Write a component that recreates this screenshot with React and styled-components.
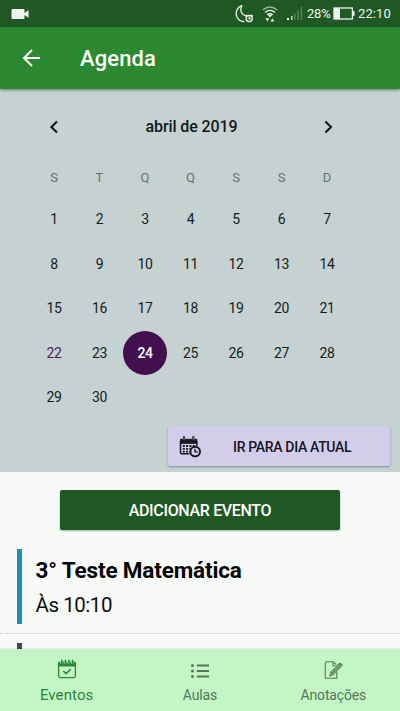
import React from 'react';
import styled, { createGlobalStyle } from 'styled-components';

const GlobalStyle = createGlobalStyle`
  * { box-sizing: border-box; }
  body { margin: 0; overflow: hidden; font-family: Roboto, "Liberation Sans", sans-serif; }
  button { border: 0; padding: 0; margin: 0; font: inherit; background: none; cursor: pointer; }
  svg { display: block; flex: none; }
`;

const Screen = styled.div`
  width: 400px;
  height: 711px;
  display: flex;
  flex-direction: column;
  overflow: hidden;
  background: #f8faf7;
  color: #111816;
`;

const StatusBar = styled.div`
  height: 27px;
  flex: none;
  display: flex;
  align-items: center;
  padding: 0 9px 0 11px;
  background: #1f5822;
  color: #eef5ee;
  font-size: 13px;
  line-height: 27px;
`;

const StatusIcons = styled.div`
  margin-left: auto;
  display: flex;
  align-items: center;
`;

const StatusGap = styled.span`
  width: ${(p) => p.$w}px;
`;

const Percent = styled.span`
  width: 24px;
  margin: 0 2px 0 4px;
  letter-spacing: -0.2px;
`;

const Clock = styled.span`
  width: 33px;
  margin: 0 0 0 3px;
  letter-spacing: 0.1px;
`;

const AppBar = styled.header`
  height: 62px;
  flex: none;
  display: flex;
  align-items: center;
  padding-left: 22px;
  gap: 39px;
  background: #2c8932;
  color: #fafdfa;
  box-shadow: 0 1px 3px rgba(0, 0, 0, 0.45);
  z-index: 1;
`;

const Title = styled.h1`
  margin: 1px 0 0;
  font-size: 22px;
  font-weight: 500;
  letter-spacing: 0.1px;
`;

const Calendar = styled.section`
  height: 383px;
  flex: none;
  display: flex;
  flex-direction: column;
  background: #c5d2d1;
`;

const MonthRow = styled.div`
  height: 75px;
  flex: none;
  display: flex;
  align-items: center;
  justify-content: space-between;
  padding: 0 63px 0 45px;
`;

const MonthName = styled.h2`
  margin: 0;
  padding-left: 1px;
  font-size: 16px;
  font-weight: 500;
  letter-spacing: -0.1px;
`;

const WeekdayRow = styled.div`
  height: 28px;
  margin: 0 0 5px 31.25px;
  flex: none;
  display: grid;
  grid-template-columns: repeat(7, 45.5px);
  align-items: center;
  justify-items: center;
`;

const WeekRow = styled.div`
  height: 44.5px;
  margin-left: 31.25px;
  flex: none;
  display: grid;
  grid-template-columns: repeat(7, 45.5px);
  justify-items: center;
`;

const WeekdayName = styled.span`
  margin-top: -2px;
  font-size: 13px;
  color: #66716f;
`;

const Day = styled.button`
  width: 44.5px;
  height: 44.5px;
  border-radius: 50%;
  font-size: 14px;
  line-height: 45.5px;
  letter-spacing: -0.4px;
  background: ${(p) => (p.$selected ? '#43104f' : 'transparent')};
  color: ${(p) => (p.$selected ? '#fff' : p.$today ? '#4b1c5c' : '#151d1b')};
  font-weight: ${(p) => (p.$selected ? 500 : 400)};
`;

const TodayButton = styled.button`
  width: 222px;
  height: 40px;
  flex: none;
  display: flex;
  align-items: center;
  align-self: flex-end;
  margin: 6.5px 10px 0 0;
  padding: 2px 0 0 11px;
  gap: 32px;
  border-radius: 2px;
  background: #d2cdea;
  color: #14161c;
  font-size: 14px;
  font-weight: 500;
  letter-spacing: -0.33px;
  box-shadow: 0 1px 2px rgba(40, 40, 70, 0.42);
`;

const Events = styled.main`
  height: 177px;
  flex: none;
  overflow: hidden;
  display: flex;
  flex-direction: column;
`;

const AddButton = styled.button`
  width: 280px;
  height: 40px;
  flex: none;
  align-self: center;
  margin: 18px 0 14px;
  border-radius: 2px;
  background: #1f5822;
  color: #fff;
  font-size: 16px;
  font-weight: 500;
  letter-spacing: -0.33px;
  box-shadow: 0 1px 2px rgba(40, 40, 80, 0.4);
`;

const EventRow = styled.article`
  height: 90px;
  flex: none;
  padding: ${(p) => (p.$next ? '9px' : '5px')} 0 9px 17px;
  border-bottom: 1px dotted #c3c6ca;
`;

const EventBody = styled.div`
  height: 75px;
  border-left: 5px solid ${(p) => p.$color};
  padding-left: 13.5px;
`;

const EventTitle = styled.h3`
  margin: 0;
  padding: 4px 0 1px;
  font-size: 22.5px;
  line-height: 34px;
  font-weight: 700;
  letter-spacing: -0.15px;
  color: #050706;
`;

const EventTime = styled.p`
  margin: 0;
  font-size: 20.5px;
  line-height: 34px;
  letter-spacing: -0.45px;
  color: #0a0d0b;
`;

const BottomNav = styled.nav`
  height: 62px;
  flex: none;
  display: grid;
  grid-template-columns: repeat(3, 1fr);
  background: #c3f6c4;
  box-shadow: 0 -1px 1px rgba(0, 0, 0, 0.06);
  z-index: 1;
`;

const NavItem = styled.button`
  display: flex;
  flex-direction: column;
  align-items: center;
  padding-top: 10px;
  color: ${(p) => (p.$active ? '#2b8733' : '#557758')};
`;

const NavLabel = styled.span`
  margin-top: 7px;
  font-size: ${(p) => (p.$active ? '15px' : '14px')};
  line-height: 18px;
  letter-spacing: ${(p) => (p.$active ? '0.1px' : '-0.15px')};
`;

const VideoIcon = () => (
  <svg width="18" height="10" viewBox="0 0 18 10" fill="currentColor">
    <rect x="0.5" y="0" width="13" height="10" rx="1" />
    <path d="M13 4.3 17.6 1.2v7.6L13 5.7z" />
  </svg>
);

const MoonIcon = () => (
  <svg width="20" height="20" viewBox="0 0 20 20" fill="none" stroke="currentColor" strokeWidth="1.3">
    <path d="M8.2 1.3C.8 4 .4 13.2 6.2 16.6q2 1 4.2 1M8.2 1.3C5.3 5.5 7.2 11.2 12.2 11.8" />
    <circle cx="15.2" cy="14.6" r="3.1" />
    <path d="M15.2 12.8v2h1.6M11.6 12.3l1.5-1.3M17.3 11l1.5 1.3" />
  </svg>
);

const WifiIcon = () => (
  <svg width="16" height="18" viewBox="0 0 16 18" fill="none" stroke="currentColor" strokeWidth="1.3">
    <path d="M.8 5.1Q8-1.2 15.2 5.1" opacity=".6" />
    <path d="M3 7.5q5-4.2 10 0M5.2 9.7q2.8-2.3 5.6 0" />
    <path d="M5.3 9.5h5.4L8 12.6zM3.4 13.2h4l-2 3.4zM8.4 16.6l2-3.3 2 3.3z" fill="currentColor" stroke="none" />
  </svg>
);

const SignalIcon = () => (
  <svg width="16" height="13" viewBox="0 0 16 13" fill="#55845a">
    <rect x="0" y="11" width="2" height="2" fill="#f1f6f1" />
    <rect x="4" y="9" width="1.5" height="4" fill="#c6d7c7" />
    <rect x="7" y="6.5" width="1.5" height="6.5" />
    <rect x="10.3" y="3" width="1.5" height="10" />
    <rect x="13.7" y="0" width="1.5" height="13" />
  </svg>
);

const BatteryIcon = () => (
  <svg width="22" height="13" viewBox="0 0 22 13" fill="currentColor">
    <rect x="1" y="1" width="18.4" height="11" fill="none" stroke="currentColor" strokeWidth="1.3" />
    <rect x="1" y="1" width="6" height="11" />
    <rect x="20" y="4.2" width="1.6" height="4.6" />
  </svg>
);

const BackIcon = () => (
  <svg width="19" height="18" viewBox="0 0 19 18" fill="none" stroke="currentColor" strokeWidth="2">
    <path d="M18 9H2M10 1 2 9l8 8" />
  </svg>
);

const Chevron = ({ right }) => (
  <svg width="18" height="18" viewBox="0 0 18 18" fill="none" stroke="#121816" strokeWidth="2.1">
    <path d={right ? 'M6.4 3.4 12 9l-5.6 5.6' : 'M12 3.4 6.4 9l5.6 5.6'} />
  </svg>
);

const CalendarClockIcon = () => (
  <svg width="22" height="22" viewBox="0 0 22 22" fill="none" stroke="#171820">
    <path d="M1.5 3.3h16.3v4H1.5z" fill="#171820" />
    <path d="M1.5 5v11.8q0 1 1 1h8M17.8 5v5" strokeWidth="1.5" />
    <path d="M5 1.2v3.4M14.3 1.2v3.4" strokeWidth="2.2" strokeLinecap="round" />
    <path d="M5 .8v3.5M14.3 .8v3.5" stroke="#aaa6bd" strokeWidth=".7" />
    <path d="M3.8 10h12.5M3.8 12.9h8M3.8 15.6h7" strokeWidth="1.8" strokeDasharray="2 1.3" />
    <circle cx="16.2" cy="15.6" r="4.8" fill="#d2cdea" strokeWidth="1.9" />
    <path d="M16 12.8v3.1h2.7" strokeWidth="1.3" />
  </svg>
);

const EventsIcon = () => (
  <svg width="20" height="20" viewBox="0 0 20 20" fill="none" stroke="currentColor">
    <rect x="1.6" y="3.2" width="16.8" height="15.4" rx="1.5" strokeWidth="1.3" />
    <path d="M1.3 7.6V4.2q0-1 1-1h15.4q1 0 1 1v3.4z" fill="currentColor" stroke="none" />
    <path d="M4.6 0v4.6M8.2 0v4.6M11.8 0v4.6M15.4 0v4.6" stroke="#c3f6c4" strokeWidth="2.6" />
    <path d="M4.8 .8v4M8.4 .8v4M12 .8v4M15.6 .8v4" strokeWidth="1.6" />
    <path d="m6.3 12 2.8 2.6 4.6-4.5" strokeWidth="1.5" />
  </svg>
);

const ListIcon = () => (
  <svg width="20" height="20" viewBox="0 0 20 20" fill="currentColor">
    <circle cx="2.5" cy="6.4" r="1.5" />
    <circle cx="2.5" cy="12" r="1.5" />
    <circle cx="2.5" cy="17.4" r="1.5" />
    <path d="M6.8 5.4H19v2H6.8zM6.8 11H19v2H6.8zM6.8 16.4H19v2H6.8z" />
  </svg>
);

const NotesIcon = () => (
  <svg width="20" height="20" viewBox="0 0 20 20" fill="none" stroke="currentColor" strokeWidth="1.1">
    <path d="M13.8 13v6.2H2.3V4.4q0-1.6 1.6-1.6h6.2l3.3 2.8M10 3v3.8h2.7" />
    <path d="m6.9 16.8 1-3.4 8.3-8.6 2.3 2.1-8.2 8.7z" />
    <path d="m7.9 13.4 2.4 2.2M9.1 14.5l7.8-8.2M16.2 4.8l1.2-.5 1.6 1.5-.5 1.1" />
  </svg>
);

const WEEKDAYS = ['S', 'T', 'Q', 'Q', 'S', 'S', 'D'];
const WEEKS = [0, 1, 2, 3, 4].map((w) =>
  [1, 2, 3, 4, 5, 6, 7].map((d) => w * 7 + d).filter((d) => d <= 30)
);

const TABS = [
  { label: 'Eventos', Icon: EventsIcon, active: true },
  { label: 'Aulas', Icon: ListIcon },
  { label: 'Anotações', Icon: NotesIcon },
];

export default function App() {
  return (
    <>
      <GlobalStyle />
      <Screen>
        <StatusBar>
          <VideoIcon />
          <StatusIcons>
            <MoonIcon />
            <StatusGap $w={8} />
            <WifiIcon />
            <StatusGap $w={9} />
            <SignalIcon />
            <Percent>28%</Percent>
            <BatteryIcon />
            <Clock>22:10</Clock>
          </StatusIcons>
        </StatusBar>
        <AppBar>
          <BackIcon />
          <Title>Agenda</Title>
        </AppBar>
        <Calendar>
          <MonthRow>
            <Chevron />
            <MonthName>abril de 2019</MonthName>
            <Chevron right />
          </MonthRow>
          <WeekdayRow>
            {WEEKDAYS.map((name, i) => (
              <WeekdayName key={i}>{name}</WeekdayName>
            ))}
          </WeekdayRow>
          {WEEKS.map((week) => (
            <WeekRow key={week[0]}>
              {week.map((day) => (
                <Day key={day} $selected={day === 24} $today={day === 22}>
                  {day}
                </Day>
              ))}
            </WeekRow>
          ))}
          <TodayButton>
            <CalendarClockIcon />
            IR PARA DIA ATUAL
          </TodayButton>
        </Calendar>
        <Events>
          <AddButton>ADICIONAR EVENTO</AddButton>
          <EventRow>
            <EventBody $color="#218cab">
              <EventTitle>3° Teste Matemática</EventTitle>
              <EventTime>Às 10:10</EventTime>
            </EventBody>
          </EventRow>
          <EventRow $next>
            <EventBody $color="#45454f" />
          </EventRow>
        </Events>
        <BottomNav>
          {TABS.map(({ label, Icon, active }) => (
            <NavItem key={label} $active={active}>
              <Icon />
              <NavLabel $active={active}>{label}</NavLabel>
            </NavItem>
          ))}
        </BottomNav>
      </Screen>
    </>
  );
}
